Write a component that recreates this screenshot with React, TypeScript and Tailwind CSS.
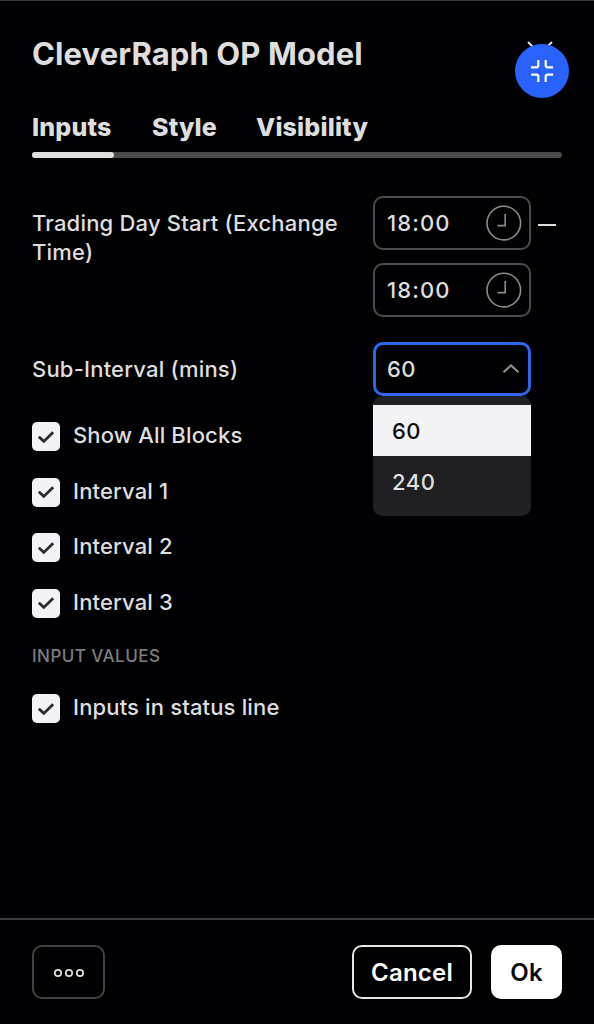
import { useState } from "react";
import clsx from "clsx";

const TABS = [
  { name: "Inputs", className: "w-[81px]" },
  { name: "Style", className: "w-[65px]" },
  { name: "Visibility", className: "w-[112px]" },
];

const INTERVALS = ["60", "240"];

function TimeInput({ value }: { value: string }) {
  return (
    <div className="flex h-[54px] w-[158px] items-center justify-between rounded-[10px] border-2 border-[#4c4c4e] pl-[12px] pr-[7px]">
      <span className="text-[22px] tracking-[1.1px]">{value}</span>
      <svg
        width="36"
        height="36"
        viewBox="0 0 36 36"
        fill="none"
        stroke="#8c8c8e"
        strokeWidth="1.6"
      >
        <circle cx="17.8" cy="18.1" r="16.8" />
        <path d="M19.2 9v11.6h-7.7" />
      </svg>
    </div>
  );
}

function Checkbox({ label }: { label: string }) {
  const [checked, setChecked] = useState(true);

  return (
    <button
      onClick={() => setChecked(!checked)}
      className="flex h-[29px] items-center gap-[13px] text-left"
    >
      <span className="flex h-[29px] w-[28px] items-center justify-center rounded-[5px] bg-[#f3f2f5]">
        {checked && (
          <svg
            width="18"
            height="14"
            viewBox="0 0 18 14"
            fill="none"
            stroke="#2b2a2e"
            strokeWidth="2.8"
          >
            <path d="M1.8 6.8l5 4.6L16.2 2.2" />
          </svg>
        )}
      </span>
      <span className="-mt-[2px] text-[22px] leading-[29px] tracking-[0.15px]">
        {label}
      </span>
    </button>
  );
}

export default function App() {
  const [tab, setTab] = useState("Inputs");
  const [interval, setInterval] = useState("60");

  return (
    <div className="relative flex h-[1024px] w-[594px] flex-col border-t border-[#343438] bg-[#010103] font-['Inter',sans-serif] font-medium text-[#dededf]">
      {/* Header */}
      <header className="flex h-[106px] items-start justify-between px-8 pt-[34px]">
        <h1 className="whitespace-nowrap text-[31px] font-bold leading-[38px] tracking-[0.1px]">
          CleverRaph OP Model
        </h1>
        <svg
          width="26"
          height="26"
          viewBox="0 0 26 26"
          fill="none"
          stroke="#e4e4e6"
          strokeWidth="2"
          className="mr-[9px] mt-[6px]"
        >
          <path d="M1 1l24 24M25 1L1 25" />
        </svg>
      </header>

      {/* Tabs */}
      <nav className="px-8">
        <div className="flex h-[45px] gap-[39px]">
          {TABS.map((t) => (
            <button
              key={t.name}
              onClick={() => setTab(t.name)}
              className={clsx(
                "h-[41px] whitespace-nowrap text-left text-[25px] font-extrabold leading-[37px] tracking-[0.15px]",
                t.className,
              )}
            >
              {t.name}
            </button>
          ))}
        </div>
        <div className="h-[6px] w-[530px] rounded-full bg-[#4b4b4c]">
          {tab === "Inputs" && (
            <div className="h-[6px] w-[82px] rounded-full bg-[#dededf]" />
          )}
        </div>
      </nav>

      {/* Settings */}
      <main className="flex-1 px-8 pt-[38px]">
        <div className="flex h-[146px]">
          <p className="w-[341px] whitespace-nowrap pt-[13px] text-[22px] leading-[28.6px] tracking-[0.2px]">
            Trading Day Start (Exchange
            <br />
            Time)
          </p>
          <div className="flex flex-col gap-[13px]">
            <TimeInput value="18:00" />
            <TimeInput value="18:00" />
          </div>
          <div className="ml-[7px] mt-[28px] h-[2px] w-[18px] bg-[#dededf]" />
        </div>

        <div className="flex h-[54px] items-center">
          <p className="w-[341px] text-[22px] tracking-[0.2px]">
            Sub-Interval (mins)
          </p>
          <div className="relative">
            <div className="flex h-[54px] w-[158px] items-center justify-between rounded-[10px] border-[3px] border-[#3066ec] pl-[11px] pr-[8px]">
              <span className="text-[22px] tracking-[0.3px]">{interval}</span>
              <svg
                width="18"
                height="10"
                viewBox="0 0 18 10"
                fill="none"
                stroke="#8c8c8e"
                strokeWidth="2.2"
              >
                <path d="M1.5 8.2L9 1.4l7.5 6.8" />
              </svg>
            </div>
            <div className="absolute left-0 top-[54px] w-full rounded-[9px] bg-[#201f22] pb-[9px] pt-[9px]">
              {INTERVALS.map((item) => (
                <button
                  key={item}
                  onClick={() => setInterval(item)}
                  className={clsx(
                    "block h-[51px] w-full pl-[19px] pt-px text-left text-[22px] tracking-[0.5px]",
                    item === interval && "bg-[#f3f2f5] text-[#0b0b0d]",
                  )}
                >
                  {item}
                </button>
              ))}
            </div>
          </div>
        </div>

        <div className="mt-[26.4px] flex flex-col items-start gap-[26.4px]">
          <Checkbox label="Show All Blocks" />
          <Checkbox label="Interval 1" />
          <Checkbox label="Interval 2" />
          <Checkbox label="Interval 3" />
        </div>

        <h2 className="mb-[26.2px] mt-[26.6px] text-[17px] leading-[24px] tracking-[0.45px] text-[#7d7d80]">
          INPUT VALUES
        </h2>
        <Checkbox label="Inputs in status line" />
      </main>

      {/* Footer */}
      <footer className="flex h-[106px] items-start border-t-2 border-[#3c3c3e] px-8 pt-[25px] text-[24px] font-semibold">
        <button className="flex h-[54px] w-[73px] items-center justify-center rounded-[10px] border-2 border-[#424244] pt-px">
          <svg
            width="32"
            height="10"
            viewBox="0 0 32 10"
            fill="none"
            stroke="#dededf"
            strokeWidth="1.7"
          >
            <circle cx="5" cy="5" r="3.2" />
            <circle cx="16" cy="5" r="3.2" />
            <circle cx="27" cy="5" r="3.2" />
          </svg>
        </button>
        <button className="ml-auto h-[54px] w-[120px] rounded-[10px] border-2 border-[#e6e6e6] pt-px tracking-[0.2px] text-white">
          Cancel
        </button>
        <button className="ml-[19px] h-[54px] w-[71px] rounded-[10px] bg-white pt-px tracking-[0.2px] text-[#0b0b0d]">
          Ok
        </button>
      </footer>

      {/* Floating collapse button */}
      <button className="absolute left-[515px] top-[43px] flex size-[54px] items-center justify-center rounded-full bg-[#2962ff]">
        <svg
          width="22"
          height="22"
          viewBox="0 0 22 22"
          fill="none"
          stroke="#fff"
          strokeWidth="2.2"
        >
          <path d="M0 7.3h5.3a2 2 0 0 0 2-2V0M14.7 0v5.3a2 2 0 0 0 2 2H22M0 14.7h5.3a2 2 0 0 1 2 2V22M14.7 22v-5.3a2 2 0 0 1 2-2H22" />
        </svg>
      </button>
    </div>
  );
}
